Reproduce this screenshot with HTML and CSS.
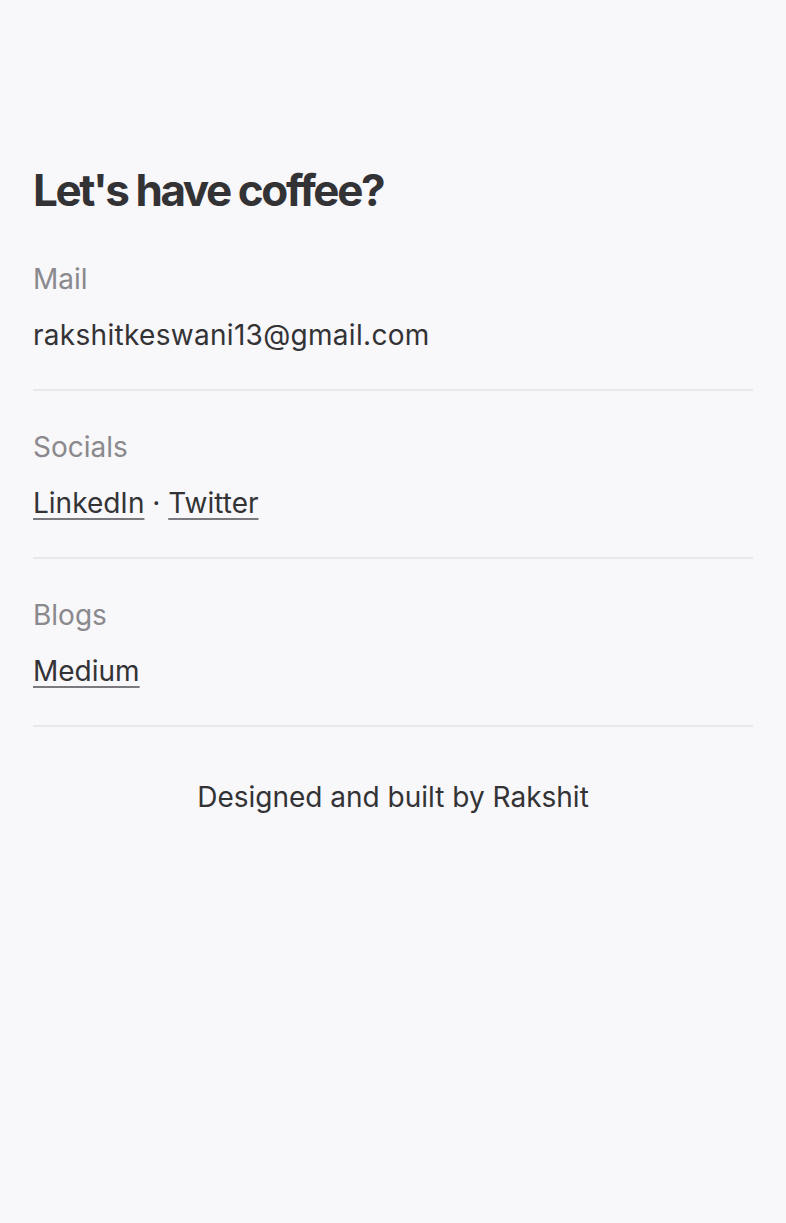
FILE: index.html
```html
<!DOCTYPE html>
<html>
<head>
    <meta charset="utf-8"/>
    <link rel="stylesheet" href="styles.css">
</head>
<body>
<div class="page">
    <h1 class="title">Let's have coffee?</h1>

    <div class="section">
        <div class="label">Mail</div>
        <div class="value mail">rakshitkeswani13@gmail.com</div>
    </div>

    <div class="section">
        <div class="label">Socials</div>
        <div class="value"><a href="#">LinkedIn</a> · <a href="#">Twitter</a></div>
    </div>

    <div class="section">
        <div class="label">Blogs</div>
        <div class="value"><a href="#">Medium</a></div>
    </div>

    <p class="footer">Designed and built by Rakshit</p>
</div>
</body>
</html>
```

FILE: styles.css
```css
body {
    margin: 0;
    padding: 0;
    background: #f8f7fa;
    color: #333336;
    font-family: Inter, "Noto Sans", sans-serif;
}

.page {
    padding: 160px 33px 40px;
}

.title {
    margin: 0 0 3px;
    font-size: 44px;
    font-weight: 700;
    letter-spacing: -2.4px;
    line-height: 60px;
}

.section {
    padding: 28px 0 26px;
    border-bottom: 2px solid #e8e7ea;
}

.label {
    font-size: 28px;
    line-height: 56px;
    color: #8a898d;
}

.value {
    font-size: 28px;
    line-height: 56px;
}

.value.mail {
    letter-spacing: 0.3px;
}

.value a {
    color: #333336;
    text-decoration: underline;
    text-decoration-color: #7a797d;
    text-decoration-thickness: 2px;
    text-underline-offset: 5px;
}

.footer {
    margin: 50px 0 0;
    text-align: center;
    font-size: 28px;
    line-height: 40px;
}
```
